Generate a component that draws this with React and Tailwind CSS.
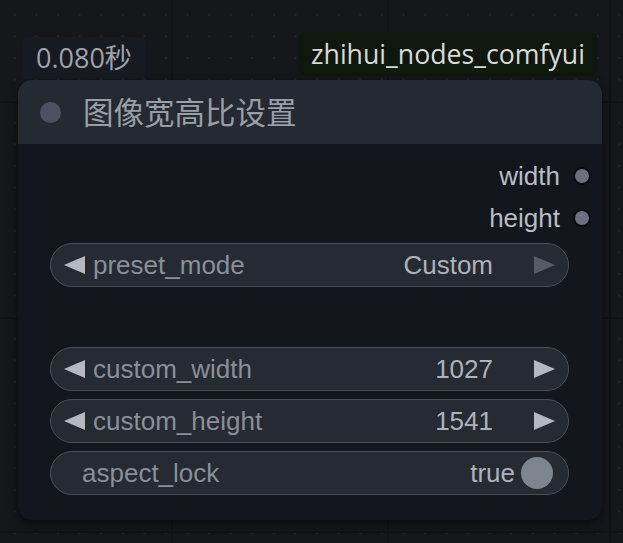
import React from "react";

const sans = { fontFamily: '"Liberation Sans", Arial, sans-serif' };
const ui = { fontFamily: '"Open Sans", "Noto Sans", "Noto Sans CJK SC", sans-serif' };
const cjk = { fontFamily: '"Noto Sans CJK SC", "Noto Sans", sans-serif' };

function LeftArrow({ color = "#b4b8c0" }) {
  return (
    <svg width="21" height="18" viewBox="0 0 21 18" className="shrink-0">
      <polygon points="0,9 21,0 21,18" fill={color} />
    </svg>
  );
}
function RightArrow({ color = "#b4b8c0" }) {
  return (
    <svg width="21" height="18" viewBox="0 0 21 18" className="shrink-0">
      <polygon points="21,9 0,0 0,18" fill={color} />
    </svg>
  );
}

function NumberWidget({ label, value, rightColor }) {
  return (
    <div
      className="h-[44px] rounded-full border-[1.5px] border-[#4a4e59] bg-[#262a33] flex items-center pl-[13px] pr-[13px] text-[26px]"
      style={sans}
    >
      <LeftArrow />
      <span className="ml-[8px] text-[#8b8f97]">{label}</span>
      <span className="ml-auto mr-[41px] text-[#aeb2b9]">{value}</span>
      <RightArrow color={rightColor} />
    </div>
  );
}

function Output({ label }) {
  return (
    <div className="h-[42px] flex items-center justify-end pr-[11px]">
      <span className="text-[26px] text-[#b9bdc4]" style={sans}>
        {label}
      </span>
      <span className="ml-[13px] w-[18px] h-[18px] rounded-full bg-[#6f6f7d] border-2 border-[#0a0b0e]" />
    </div>
  );
}

export default function App() {
  return (
    <div className="relative w-[623px] h-[543px] overflow-hidden bg-[#15171b]">
      {/* dot grid */}
      <div className="absolute inset-0 bg-[radial-gradient(circle,#22252b_1px,transparent_1.5px)] bg-size-[21.6px_21.6px] bg-position-[4px_4px]" />
      {/* grid lines */}
      <div className="absolute top-0 bottom-0 left-[171px] w-[2px] bg-[#101216]" />
      <div className="absolute top-0 bottom-0 left-[387px] w-[2px] bg-[#101216]" />
      <div className="absolute top-0 bottom-0 left-[609px] w-[2px] bg-[#101216]" />
      <div className="absolute left-0 right-0 top-[101px] h-[2px] bg-[#101216]" />
      <div className="absolute left-0 right-0 top-[317px] h-[2px] bg-[#101216]" />
      <div className="absolute left-0 right-0 top-[531px] h-[2px] bg-[#101216]" />

      {/* timing badge */}
      <div
        className="absolute left-[22px] top-[37px] w-[124px] h-[42px] bg-[#171a21] rounded-t-[6px] flex items-center pl-[14px] text-[27px] text-[#a0a4aa]"
        style={ui}
      >
        0.080秒
      </div>

      {/* source badge */}
      <div
        className="absolute left-[299px] top-[32px] h-[44px] px-[12px] bg-[#0f170f] rounded-[8px] flex items-center text-[26.7px] text-[#d7dbd5]"
        style={ui}
      >
        zhihui_nodes_comfyui
      </div>

      {/* node */}
      <div className="absolute left-[18px] top-[80px] w-[584px] h-[440px] rounded-[14px] bg-[#13161c] shadow-[0_4px_10px_rgba(0,0,0,0.55)] overflow-hidden flex flex-col">
        <div className="h-[64px] bg-[#252932] flex items-center pl-[22px] shrink-0">
          <span className="w-[21px] h-[21px] rounded-full bg-[#4c5062]" />
          <span className="ml-[22px] text-[30.5px] text-[#9a9ea6]" style={cjk}>
            图像宽高比设置
          </span>
        </div>
        <div className="pt-[11px] flex flex-col">
          <Output label="width" />
          <Output label="height" />
        </div>
        <div className="mt-[4px] px-[32px] pr-[33px] flex flex-col gap-[8px]">
          <div
            className="h-[44px] rounded-full border-[1.5px] border-[#4a4e59] bg-[#262a33] flex items-center pl-[13px] pr-[13px] text-[26px]"
            style={sans}
          >
            <LeftArrow />
            <span className="ml-[8px] text-[#8b8f97]">preset_mode</span>
            <span className="ml-auto mr-[41px] text-[#aeb2b9]">Custom</span>
            <RightArrow color="#575b66" />
          </div>
          <div className="h-[44px]" />
          <NumberWidget label="custom_width" value="1027" />
          <NumberWidget label="custom_height" value="1541" />
          <div
            className="h-[44px] rounded-full border-[1.5px] border-[#4a4e59] bg-[#262a33] flex items-center pl-[31px] pr-[15px] text-[26px]"
            style={sans}
          >
            <span className="text-[#8b8f97]">aspect_lock</span>
            <span className="ml-auto mr-[6px] text-[#aeb2b9]">true</span>
            <span className="w-[32px] h-[32px] rounded-full bg-[#7e8490]" />
          </div>
        </div>
      </div>
    </div>
  );
}
